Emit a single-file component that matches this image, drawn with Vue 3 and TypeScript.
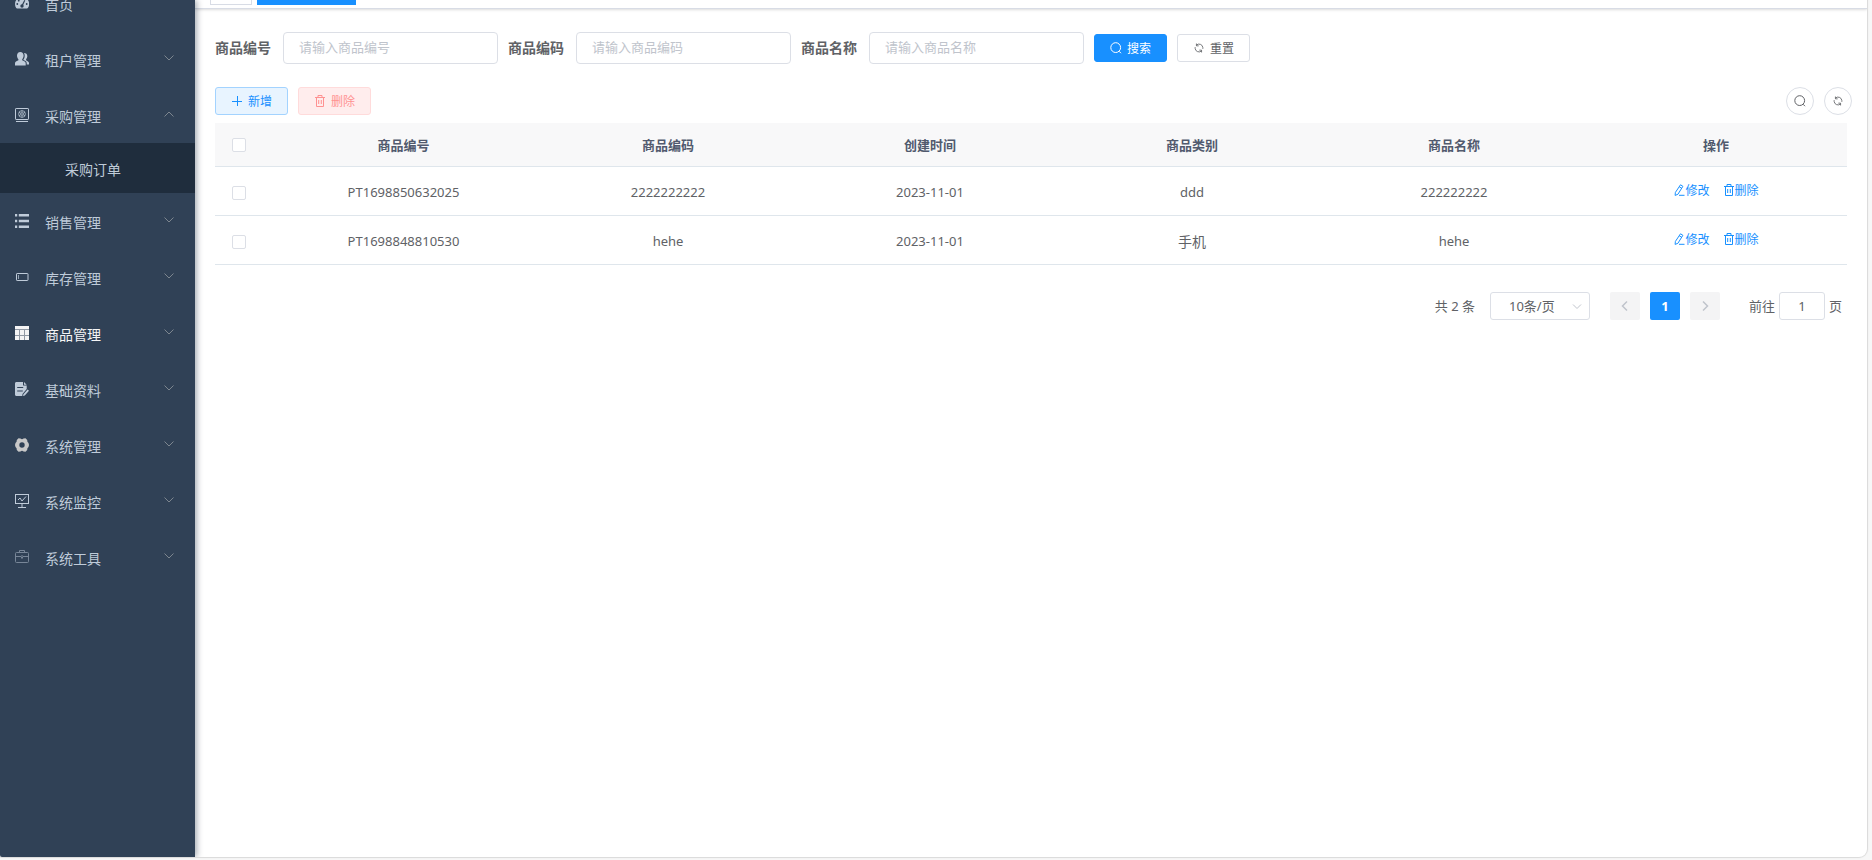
<script setup lang="ts">
import { ref } from 'vue'

interface MenuItem {
  label: string
  icon: string
  leaf?: boolean
  active?: boolean
  open?: boolean
  children?: string[]
}

interface Product {
  no: string
  code: string
  created: string
  category: string
  name: string
}

const menu: MenuItem[] = [
  { label: '首页', icon: 'dashboard', leaf: true },
  { label: '租户管理', icon: 'people' },
  { label: '采购管理', icon: 'purchase', open: true, children: ['采购订单'] },
  { label: '销售管理', icon: 'list' },
  { label: '库存管理', icon: 'stock' },
  { label: '商品管理', icon: 'grid', active: true },
  { label: '基础资料', icon: 'document' },
  { label: '系统管理', icon: 'gear' },
  { label: '系统监控', icon: 'monitor' },
  { label: '系统工具', icon: 'toolbox' },
]

const fields = ref([
  { id: 'no', label: '商品编号', value: '' },
  { id: 'code', label: '商品编码', value: '' },
  { id: 'name', label: '商品名称', value: '' },
])

const headers = ['商品编号', '商品编码', '创建时间', '商品类别', '商品名称', '操作']

const rows: Product[] = [
  { no: 'PT1698850632025', code: '2222222222', created: '2023-11-01', category: 'ddd', name: '222222222' },
  { no: 'PT1698848810530', code: 'hehe', created: '2023-11-01', category: '手机', name: 'hehe' },
]

const page = ref('1')
const isHan = (text: string): boolean => /[\u4e00-\u9fff]/.test(text)
</script>

<template>
  <div class="shell">
    <div class="frame">
      <aside class="sidebar">
        <ul class="menu">
          <li v-for="item in menu" :key="item.label">
            <a href="#" class="menu-item" :class="{ active: item.active }">
              <svg class="menu-icon" viewBox="0 0 14 14" aria-hidden="true">
                <template v-if="item.icon === 'dashboard'">
                  <path fill="currentColor" d="M7 1a7 7 0 0 0-7 7c0 1.500.4 2.900 1.200 4.100.2.300.5.400.8.400h10c.3 0 .6-.1.800-.4A7 7 0 0 0 7 1z" />
                  <g fill="#304156">
                    <circle cx="7" cy="3.200" r=".9" />
                    <circle cx="3.700" cy="4.700" r=".9" />
                    <circle cx="2.300" cy="8" r=".9" />
                    <circle cx="11.700" cy="8" r=".9" />
                    <circle cx="7" cy="10" r="1.700" />
                    <path d="M9.300 4l1 .5-2.500 5.200-1.200-.5z" />
                  </g>
                </template>
                <template v-else-if="item.icon === 'people'">
                  <path fill="currentColor" d="M5.300 0c2 0 3.300 1.500 3.300 3.600 0 1.500-.6 2.900-1.400 3.700v1l2.500 1.300c.7.400 1 .9 1 1.700V13.500H0v-2.200c0-.8.300-1.300 1-1.700l2.400-1.300v-1C2.500 6.500 2 5.100 2 3.600 2 1.500 3.300 0 5.300 0z" />
                  <path fill="currentColor" d="M9 .9c2 0 3.300 1.200 3.300 3.200 0 1.400-.5 2.500-1.200 3.200v1l1.900 1.200c.7.400 1 .9 1 1.600v1.400h-2.300v-1.200c0-1.200-.6-2-1.600-2.500L8.500 8V7.600c.7-1 1.200-2.400 1.200-3.900C9.700 2.500 9.500 1.600 9 .9z" />
                </template>
                <template v-else-if="item.icon === 'purchase'">
                  <g fill="none" stroke="currentColor">
                    <rect x=".5" y=".5" width="13" height="11" rx=".6" />
                    <path d="M1 13.500h12" />
                    <g stroke-width=".7">
                      <circle cx="7" cy="6" r="3.400" />
                      <circle cx="7" cy="6" r="1.300" />
                      <path d="M7 2.500v2.200M7 7.300v2.200M4 4.200l1.900 1.100M8.100 6.700L10 7.800M10 4.200L8.100 5.300M5.900 6.700L4 7.800" />
                    </g>
                  </g>
                </template>
                <template v-else-if="item.icon === 'list'">
                  <path fill="currentColor" d="M0 0h2.200v2.400H0zM3.800 0H14v2.400H3.800zM0 5.800h2.200v2.400H0zM3.800 5.800H14v2.400H3.800zM0 11.600h2.200V14H0zM3.800 11.600H14V14H3.800z" />
                </template>
                <template v-else-if="item.icon === 'stock'">
                  <rect x="1.500" y="3.500" width="11.500" height="7" rx=".6" fill="none" stroke="currentColor" />
                  <path d="M3.500 5v4" stroke="currentColor" opacity=".7" />
                </template>
                <template v-else-if="item.icon === 'grid'">
                  <rect width="14" height="14" fill="currentColor" />
                  <path d="M0 3.500h14M0 9.500h14M4.500 4v10M9.500 4v10" stroke="#304156" opacity=".5" />
                </template>
                <template v-else-if="item.icon === 'document'">
                  <path fill="currentColor" fill-rule="evenodd" d="M1.500 0H8v3.500h3.700V7L7.500 12l-.2 2H1.500C.6 14 0 13.400 0 12.500v-11C0 .6.600 0 1.500 0zM2.200 5v1.100h6V5zM2.200 8.500v1.100h5.600V8.500z" />
                  <path fill="currentColor" d="M9 0l2.700 2.700H9zM12.600 7.600l1.400 1.200-4.200 4.600-1.800.6.400-1.800z" />
                </template>
                <template v-else-if="item.icon === 'gear'">
                  <path fill="#c8c8c8" fill-rule="evenodd" d="M3.500.3L5.500.6Q7 2 8.500.6L10.500.3 12.200 2Q12 4 13.500 5L14 7l-.5 2Q12 10 12.200 12l-1.700 1.700-2-.3Q7 12 5.500 13.400l-2 .3L1.800 12Q2 10 .5 9L0 7l.5-2Q2 4 1.800 2zM7 4.300a2.700 2.700 0 1 0 0 5.400 2.700 2.700 0 0 0 0-5.400z" />
                </template>
                <template v-else-if="item.icon === 'monitor'">
                  <g fill="none" stroke="currentColor">
                    <rect x=".5" y=".5" width="13" height="9" />
                    <path d="M7 10v3M3 13.500h8M3 6l2-2 2 3 4-4.500" />
                  </g>
                </template>
                <template v-else>
                  <g fill="none" stroke="currentColor" opacity=".5">
                    <rect x=".5" y="2.500" width="13" height="10" rx="1" />
                    <path d="M4.500 2.500v-2h5v2M1 6.500h5M8 6.500h5M7 5v4M6 7.500h2" />
                  </g>
                </template>
              </svg>
              <span class="menu-label">{{ item.label }}</span>
              <svg v-if="!item.leaf" class="caret" :class="{ up: item.open }" viewBox="0 0 10 6" aria-hidden="true">
                <path d="M.5.5L5 5 9.500.5" fill="none" stroke="currentColor" />
              </svg>
            </a>
            <ul v-if="item.children" class="submenu">
              <li v-for="child in item.children" :key="child">
                <a href="#" class="submenu-item">{{ child }}</a>
              </li>
            </ul>
          </li>
        </ul>
      </aside>

      <main class="main">
        <div class="tags">
          <span class="tag-home"></span>
          <span class="tag-current"></span>
        </div>

        <div class="content">
          <form class="search" @submit.prevent>
            <div v-for="field in fields" :key="field.id" class="field">
              <label :for="field.id">{{ field.label }}</label>
              <input :id="field.id" v-model="field.value" type="text" :placeholder="'请输入' + field.label" />
            </div>
            <button type="submit" class="btn primary">
              <svg class="icon" viewBox="0 0 12 12" aria-hidden="true">
                <g fill="none" stroke="currentColor"><circle cx="5.700" cy="5.600" r="4.900" /><path d="M9 9.200l2 2" /></g>
              </svg>
              <span>搜索</span>
            </button>
            <button type="reset" class="btn">
              <svg class="icon" viewBox="-1 -1 14 14" aria-hidden="true">
                <path d="M10.500 7V5.500A4.500 4.500 0 0 0 3 2.600M1.500 5v1.500A4.500 4.500 0 0 0 9 9.400M3 .8v2.700h2.600M9 11.200V8.500H6.400" fill="none" stroke="currentColor" />
              </svg>
              <span>重置</span>
            </button>
          </form>

          <div class="toolbar">
            <button type="button" class="btn add">
              <svg class="icon" viewBox="0 0 12 12" aria-hidden="true">
                <path d="M6.500 1v10M1 6.500h10" fill="none" stroke="currentColor" />
              </svg>
              <span>新增</span>
            </button>
            <button type="button" class="btn remove" disabled>
              <svg class="icon" viewBox="0 0 12 12" aria-hidden="true">
                <path d="M1 2.500h10M4 2.500v-2h4v2M2.500 2.500v9h7v-9M4.700 5v4M7.300 5v4" fill="none" stroke="currentColor" />
              </svg>
              <span>删除</span>
            </button>
            <div class="round-group">
              <button type="button" class="round" aria-label="搜索">
                <svg class="icon" viewBox="0 0 12 12" aria-hidden="true">
                  <g fill="none" stroke="currentColor"><circle cx="5.700" cy="5.600" r="4.900" /><path d="M9 9.200l2 2" /></g>
                </svg>
              </button>
              <button type="button" class="round" aria-label="刷新">
                <svg class="icon" viewBox="-1 -1 14 14" aria-hidden="true">
                  <path d="M10.500 7V5.500A4.500 4.500 0 0 0 3 2.600M1.500 5v1.500A4.500 4.500 0 0 0 9 9.400M3 .8v2.700h2.600M9 11.200V8.500H6.400" fill="none" stroke="currentColor" />
                </svg>
              </button>
            </div>
          </div>

          <table class="table">
            <colgroup>
              <col class="col-check" />
              <col class="col-first" />
              <col v-for="n in 5" :key="n" class="col-rest" />
            </colgroup>
            <thead>
              <tr>
                <th class="check"><input type="checkbox" aria-label="全选" /></th>
                <th v-for="title in headers" :key="title">{{ title }}</th>
              </tr>
            </thead>
            <tbody>
              <tr v-for="row in rows" :key="row.no">
                <td class="check"><input type="checkbox" :aria-label="row.no" /></td>
                <td>{{ row.no }}</td>
                <td>{{ row.code }}</td>
                <td>{{ row.created }}</td>
                <td :class="{ han: isHan(row.category) }">{{ row.category }}</td>
                <td>{{ row.name }}</td>
                <td>
                  <div class="actions">
                    <button type="button" class="link">
                      <svg class="icon" viewBox="0 0 12 12" aria-hidden="true">
                        <path d="M7.500.8l2.400 1.500-5 8-2.800 1.100.3-3zM6.300 2.800l2.400 1.500M6 11.300h5.500" fill="none" stroke="currentColor" />
                      </svg>
                      <span>修改</span>
                    </button>
                    <button type="button" class="link">
                      <svg class="icon" viewBox="0 0 12 12" aria-hidden="true">
                        <path d="M1 2.500h10M4 2.500v-2h4v2M2.500 2.500v9h7v-9M4.700 5v4M7.300 5v4" fill="none" stroke="currentColor" />
                      </svg>
                      <span>删除</span>
                    </button>
                  </div>
                </td>
              </tr>
            </tbody>
          </table>

          <nav class="pagination" aria-label="分页">
            <span class="total">共 2 条</span>
            <div class="size">
              <select aria-label="每页条数">
                <option>10条/页</option>
              </select>
              <svg class="size-caret" viewBox="0 0 10 6" aria-hidden="true">
                <path d="M1 .5l4 4 4-4" fill="none" stroke="currentColor" />
              </svg>
            </div>
            <div class="pager">
              <button type="button" class="page" disabled aria-label="上一页">
                <svg viewBox="0 0 12 12" aria-hidden="true"><path d="M8 1.500L3.500 6 8 10.500" fill="none" stroke="currentColor" stroke-width="1.500" /></svg>
              </button>
              <button type="button" class="page current">1</button>
              <button type="button" class="page" disabled aria-label="下一页">
                <svg viewBox="0 0 12 12" aria-hidden="true"><path d="M4 1.500L8.500 6 4 10.500" fill="none" stroke="currentColor" stroke-width="1.500" /></svg>
              </button>
            </div>
            <div class="jump">
              <label for="jump-page">前往</label>
              <input id="jump-page" v-model="page" type="text" />
              <span>页</span>
            </div>
          </nav>
        </div>
      </main>
    </div>
  </div>
</template>

<style>
body {
  margin: 0;
  background: #f7f7f7;
}
</style>

<style scoped>
* {
  box-sizing: border-box;
}

.shell {
  height: 100vh;
  padding: 0 5px 3px 0;
  font-family: 'Noto Sans', 'Noto Sans CJK SC', sans-serif;
  font-size: 13px;
  color: #606266;
}

.frame {
  display: flex;
  height: 100%;
  overflow: hidden;
  background: #fff;
  border-radius: 0 0 8px 2px;
  box-shadow: 0 0 1px 1px #d9d9d9;
}

button,
input,
select {
  font-family: inherit;
  color: inherit;
}

button {
  cursor: pointer;
}

ul {
  margin: 0;
  padding: 0;
  list-style: none;
}

.sidebar {
  z-index: 1;
  flex: 0 0 195px;
  overflow: hidden;
  background: #304156;
  box-shadow: 2px 0 6px rgba(0, 21, 41, 0.35);
}

.menu {
  margin-top: -25px;
}

.menu-item {
  display: flex;
  align-items: center;
  height: 56px;
  padding: 0 21px 0 15px;
  font-size: 14px;
  color: #bfcbd9;
  text-decoration: none;
}

.menu-item.active {
  color: #f4f4f5;
}

.menu-icon {
  width: 14px;
  height: 14px;
  margin-right: 16px;
}

.menu-label {
  flex: 1;
  padding-top: 2px;
}

.caret {
  width: 10px;
  height: 6px;
  margin-bottom: 2px;
  color: #7d868f;
}

.caret.up {
  transform: rotate(180deg);
}

.submenu-item {
  display: flex;
  align-items: center;
  height: 50px;
  padding: 2px 0 0 65px;
  font-size: 14px;
  color: #bfcbd9;
  text-decoration: none;
  background: #1f2d3d;
}

.main {
  flex: 1;
  min-width: 0;
}

.tags {
  display: flex;
  gap: 5px;
  height: 9px;
  padding: 0 15px 3px;
  border-bottom: 1px solid #d8dce5;
  box-shadow: 0 1px 3px rgba(0, 0, 0, 0.12), 0 0 3px rgba(0, 0, 0, 0.04);
}

.tag-home {
  width: 42px;
  border: 1px solid #d8dce5;
  border-top: 0;
}

.tag-current {
  width: 99px;
  background: #1890ff;
}

.content {
  padding: 23px 20px 20px;
}

.search {
  display: flex;
  flex-wrap: wrap;
  align-items: center;
  gap: 10px;
}

.field {
  display: flex;
  align-items: center;
}

.field label {
  width: 68px;
  padding-bottom: 2px;
  font-size: 14px;
  font-weight: 700;
}

.field input {
  width: 215px;
  height: 32px;
  padding: 0 15px 3px;
  font-size: 13px;
  background: #fff;
  border: 1px solid #dcdfe6;
  border-radius: 4px;
  outline: 0;
}

.field input::placeholder {
  color: #c0c4cc;
}

.btn {
  display: flex;
  align-items: center;
  gap: 5px;
  height: 28px;
  padding: 0 15px;
  font-size: 12px;
  background: #fff;
  border: 1px solid #dcdfe6;
  border-radius: 3px;
}

.icon {
  display: block;
  flex: none;
  width: 12px;
  height: 12px;
}

.btn.primary {
  color: #fff;
  background: #1890ff;
  border-color: #1890ff;
}

.btn.add {
  color: #1890ff;
  background: #e8f4ff;
  border-color: #a3d3ff;
}

.btn.remove {
  color: #ff9292;
  background: #ffeded;
  border-color: #ffdbdb;
}

.toolbar {
  display: flex;
  gap: 10px;
  margin-top: 23px;
}

.round-group {
  display: flex;
  gap: 10px;
  margin: 0 -5px 0 auto;
}

.round {
  display: flex;
  align-items: center;
  justify-content: center;
  width: 28px;
  height: 28px;
  padding: 0;
  background: #fff;
  border: 1px solid #dcdfe6;
  border-radius: 50%;
}

.table {
  width: 100%;
  margin-top: 8px;
  table-layout: fixed;
  border-collapse: separate;
  border-spacing: 0;
}

.col-check {
  width: 55px;
}

.col-first {
  width: 267px;
}

.col-rest {
  width: 262px;
}

th,
td {
  padding: 0;
  text-align: center;
  border-bottom: 1px solid #dfe6ec;
}

th {
  height: 44px;
  padding-bottom: 1px;
  font-size: 13px;
  font-weight: 700;
  color: #515a6e;
  background: #f8f8f9;
}

td {
  height: 49px;
  padding-top: 1px;
}

td.han {
  font-size: 14px;
}

.check {
  padding-left: 17px;
  text-align: left;
}

.check input {
  display: block;
  width: 14px;
  height: 14px;
  margin: 2px 0 0;
  appearance: none;
  background: #fff;
  border: 1px solid #dcdfe6;
  border-radius: 2px;
}

.actions {
  display: flex;
  justify-content: center;
  gap: 13px;
  padding-bottom: 3px;
}

.link {
  display: flex;
  align-items: center;
  padding: 0;
  font-size: 12px;
  color: #1890ff;
  background: none;
  border: 0;
}

.pagination {
  display: flex;
  align-items: center;
  justify-content: flex-end;
  height: 28px;
  margin: 27px 5px 0 0;
}

.total,
.jump label,
.jump span {
  padding-bottom: 2px;
}

.size {
  position: relative;
  margin: 0 20px 0 15px;
}

.size select {
  display: block;
  width: 100px;
  height: 28px;
  padding: 0 30px 0 18px;
  font-size: 13px;
  appearance: none;
  background: #fff;
  border: 1px solid #dcdfe6;
  border-radius: 3px;
}

.size-caret {
  position: absolute;
  top: 12px;
  right: 8px;
  width: 10px;
  height: 6px;
  color: #c0c4cc;
  pointer-events: none;
}

.pager {
  display: flex;
  gap: 10px;
}

.page {
  display: flex;
  align-items: center;
  justify-content: center;
  width: 30px;
  height: 28px;
  padding: 0;
  font-size: 13px;
  font-weight: 700;
  color: #c0c4cc;
  background: #f4f4f5;
  border: 0;
  border-radius: 2px;
}

.page svg {
  width: 12px;
  height: 12px;
}

.page.current {
  color: #fff;
  background: #1890ff;
}

.jump {
  display: flex;
  align-items: center;
  gap: 4px;
  margin-left: 29px;
}

.jump input {
  width: 46px;
  height: 28px;
  padding: 0;
  font-size: 13px;
  text-align: center;
  background: #fff;
  border: 1px solid #dcdfe6;
  border-radius: 3px;
}
</style>
